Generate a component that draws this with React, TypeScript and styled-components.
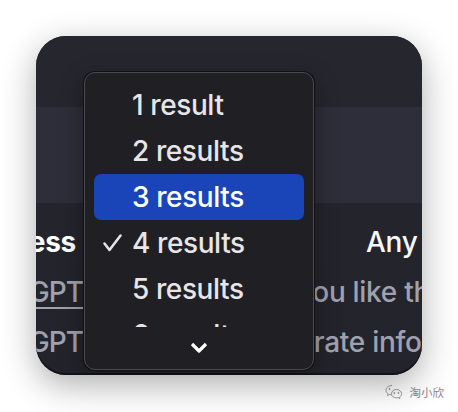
import React from "react";
import styled, { createGlobalStyle } from "styled-components";

const GlobalStyle = createGlobalStyle`
  html, body { margin: 0; padding: 0; background: #ffffff; }
  body { font-family: Inter, "Noto Sans", sans-serif; -webkit-font-smoothing: antialiased; }
  * { box-sizing: border-box; }
`;

const Page = styled.div`
  width: 458px;
  height: 412px;
  padding: 36px 36px 0;
  display: flex;
  flex-direction: column;
  overflow: hidden;
`;

const Window = styled.div`
  position: relative;
  width: 386px;
  height: 339px;
  border-radius: 30px;
  overflow: hidden;
  background: linear-gradient(#25262e, #23242b);
  box-shadow: 0 10px 34px rgba(0, 0, 0, 0.32), inset 0 -2px 0 #141418;
  display: flex;
  flex-direction: column;
`;

const TitleBar = styled.div`
  height: 71px;
  background: #26262f;
  flex: none;
`;

const Toolbar = styled.div`
  height: 96px;
  background: #2e2e3a;
  flex: none;
`;

const Content = styled.div`
  padding-top: 14px;
  display: flex;
  flex-direction: column;
`;

const Row = styled.div`
  display: grid;
  grid-template-columns: 48px 230px 108px;
  height: 50px;
  line-height: 50px;
  font-size: 28px;
  letter-spacing: -0.3px;
  white-space: nowrap;
`;

const LeftCell = styled.div<{ $pad: number; $bold?: boolean; $tone: string; $underline?: boolean }>`
  display: flex;
  justify-content: flex-end;
  padding-right: ${(p) => p.$pad}px;
  font-weight: ${(p) => (p.$bold ? 700 : 500)};
  letter-spacing: ${(p) => (p.$bold ? "-0.3px" : "-1px")};
  color: ${(p) => p.$tone};
  span {
    text-decoration: ${(p) => (p.$underline ? "underline" : "none")};
    text-decoration-thickness: 1.5px;
    text-underline-offset: 5px;
  }
`;

const MidCell = styled.div``;

const RightCell = styled.div<{ $offset: number; $tone: string }>`
  display: flex;
  justify-content: flex-start;
  margin-left: ${(p) => p.$offset}px;
  font-weight: 500;
  color: ${(p) => p.$tone};
`;

const Menu = styled.div`
  position: absolute;
  left: 48px;
  top: 36px;
  width: 230px;
  height: 298px;
  border-radius: 11px;
  background: #201f24;
  border: 1px solid #4b4a50;
  box-shadow: 0 0 0 1px #111114, 0 8px 24px rgba(0, 0, 0, 0.35);
  display: flex;
  flex-direction: column;
  overflow: hidden;
`;

const List = styled.div`
  height: 254px;
  overflow: hidden;
  padding: 9px 9px 0;
  flex: none;
`;

const Item = styled.div<{ $active?: boolean }>`
  height: 46px;
  display: flex;
  align-items: center;
  padding-left: 9px;
  border-radius: 7px;
  background: ${(p) => (p.$active ? "#1a45b8" : "transparent")};
  color: ${(p) => (p.$active ? "#ffffff" : "#e6e6e9")};
  font-size: 28px;
  font-weight: 500;
  letter-spacing: -0.4px;
  white-space: nowrap;
`;

const CheckSlot = styled.span`
  width: 29px;
  flex: none;
  display: flex;
  align-items: center;
`;

const ScrollArrow = styled.div`
  flex: 1;
  display: flex;
  align-items: center;
  justify-content: center;
  padding-bottom: 1px;
`;

const Watermark = styled.div`
  display: flex;
  justify-content: flex-end;
  align-items: center;
  gap: 7px;
  margin-top: 9px;
  margin-right: -22px;
  color: #8a8a8a;
  font-size: 11.5px;
  font-family: "Noto Sans CJK SC", sans-serif;
`;

const Check = () => (
  <svg width="19" height="18" viewBox="0 0 19 18" fill="none">
    <path d="M1.5 9.5 L6.5 16 L17.5 1.5" stroke="#e6e6e9" strokeWidth="2.5" strokeLinecap="round" strokeLinejoin="round" />
  </svg>
);

const Chevron = () => (
  <svg width="18" height="11" viewBox="0 0 18 11" fill="none">
    <path d="M2 2 L9 9 L16 2" stroke="#ffffff" strokeWidth="3.2" strokeLinejoin="round" />
  </svg>
);

const WeChat = () => (
  <svg width="18" height="16" viewBox="0 0 18 16" fill="none" stroke="#9a9a9a" strokeWidth="1">
    <path d="M7 1.5 C3.5 1.5 1 3.6 1 6.2 C1 7.7 1.8 9 3.1 9.8 L2.6 11.6 L4.7 10.5 C5.4 10.7 6.1 10.8 6.8 10.8" />
    <path d="M11.5 5.5 C8.6 5.5 6.5 7.4 6.5 9.7 C6.5 12 8.6 13.9 11.5 13.9 C12.1 13.9 12.7 13.8 13.2 13.6 L15 14.6 L14.6 13 C15.9 12.2 16.6 11 16.6 9.7 C16.6 7.4 14.4 5.5 11.5 5.5 Z" />
    <circle cx="4.5" cy="5" r="0.6" fill="#9a9a9a" />
    <circle cx="9.3" cy="9" r="0.6" fill="#9a9a9a" />
    <circle cx="13.5" cy="9" r="0.6" fill="#9a9a9a" />
  </svg>
);

const options = ["1 result", "2 results", "3 results", "4 results", "5 results", "6 results", "7 results"];

export default function App() {
  return (
    <>
      <GlobalStyle />
      <Page>
        <Window>
          <TitleBar />
          <Toolbar />
          <Content>
            <Row>
              <LeftCell $pad={8} $bold $tone="#ffffff"><span>Business</span></LeftCell>
              <MidCell />
              <RightCell $offset={52} $tone="#f7f7f8">Any time</RightCell>
            </Row>
            <Row>
              <LeftCell $pad={1} $tone="#a0a1ae" $underline><span>ChatGPT</span></LeftCell>
              <MidCell />
              <RightCell $offset={-17} $tone="#a0a1ae">you like the context</RightCell>
            </Row>
            <Row>
              <LeftCell $pad={1} $tone="#a0a1ae"><span>ChatGPT</span></LeftCell>
              <MidCell />
              <RightCell $offset={-64} $tone="#a0a1ae">accurate information</RightCell>
            </Row>
          </Content>
          <Menu>
            <List>
              {options.map((o, i) => (
                <Item key={o} $active={i === 2}>
                  <CheckSlot>{i === 3 ? <Check /> : null}</CheckSlot>
                  {o}
                </Item>
              ))}
            </List>
            <ScrollArrow>
              <Chevron />
            </ScrollArrow>
          </Menu>
        </Window>
        <Watermark>
          <WeChat />
          <span>淘小欣</span>
        </Watermark>
      </Page>
    </>
  );
}
